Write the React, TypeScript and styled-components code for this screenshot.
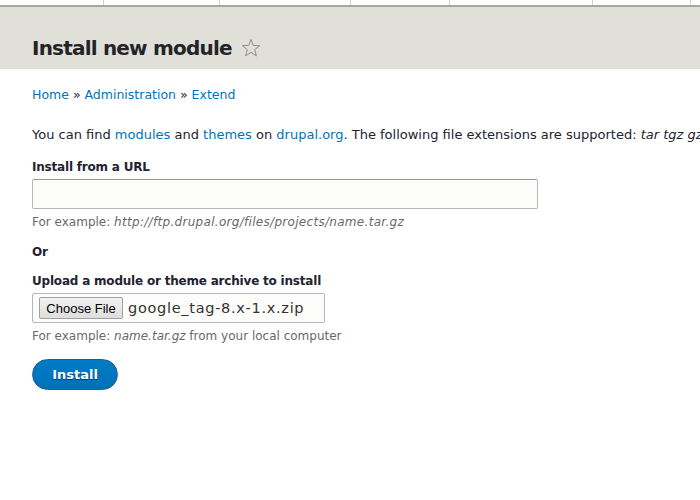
import React from "react";
import styled, { createGlobalStyle } from "styled-components";

const Global = createGlobalStyle`
  html, body { margin: 0; padding: 0; background: #ffffff; overflow: hidden; }
  body { font-family: "DejaVu Sans", "Liberation Sans", sans-serif; color: #222330; font-size: 13px; }
`;

const Toolbar = styled.div`
  display: flex;
  height: 5px;
  background: #ffffff;
  border-bottom: 2px solid #a7a79f;
`;

const ToolbarItem = styled.div<{ $w: number }>`
  width: ${(p) => p.$w}px;
  flex: none;
  box-sizing: border-box;
  border-right: 1px solid #d4d4d0;
`;

const Header = styled.header`
  background: #e0e0d8;
  height: 62px;
  box-sizing: border-box;
  padding: 0 32px 9px;
  display: flex;
  align-items: flex-end;
`;

const Title = styled.h1`
  margin: 0;
  font-size: 20px;
  letter-spacing: -0.8px;
  font-weight: bold;
  color: #232429;
  display: flex;
  align-items: center;
  gap: 9px;
`;

const Main = styled.main`
  padding: 0 32px;
`;

const Breadcrumb = styled.nav`
  margin-top: 17px;
  line-height: 18px;
  font-size: 12.5px;
  color: #222330;
`;

const Link = styled.a`
  color: #0074bd;
  text-decoration: none;
`;

const Intro = styled.p`
  margin: 22px -32px 0 0;
  line-height: 18px;
  white-space: nowrap;
  overflow: hidden;
`;

const Label = styled.label`
  display: block;
  font-weight: bold;
  font-size: 12px;
  letter-spacing: -0.2px;
  line-height: 18px;
`;

const Field = styled.div<{ $top: number }>`
  margin-top: ${(p) => p.$top}px;
`;

const TextInput = styled.input`
  display: block;
  margin-top: 3px;
  width: 506px;
  height: 30px;
  box-sizing: border-box;
  border: 1px solid #b8b8b8;
  border-top-color: #999;
  border-radius: 2px;
  background: #fcfcfa;
`;

const Description = styled.div`
  margin-top: 5px;
  font-size: 12px;
  line-height: 16px;
  color: #68696b;
`;

const Example = styled.em<{ $spacing?: number }>`
  font-style: italic;
  letter-spacing: ${(p) => p.$spacing ?? 0}px;
`;

const FileBox = styled.div`
  margin-top: 3px;
  width: 293px;
  height: 30px;
  box-sizing: border-box;
  border: 1px solid #b8b8b8;
  border-radius: 2px;
  background: #fcfcfa;
  display: flex;
  align-items: center;
  padding-left: 6px;
  gap: 5px;
`;

const ChooseButton = styled.span`
  font-family: "Liberation Sans", Arial, sans-serif;
  font-size: 13px;
  color: #000;
  width: 84px;
  height: 22px;
  box-sizing: border-box;
  display: flex;
  align-items: center;
  justify-content: center;
  border: 1px solid #a0a0a0;
  border-radius: 2px;
  background: linear-gradient(#f2f2f2, #dedede);
`;

const FileName = styled.span`
  font-size: 14.5px;
  letter-spacing: 0.7px;
  color: #333;
`;

const InstallButton = styled.button`
  display: block;
  margin-top: 15px;
  width: 86px;
  height: 31px;
  border-radius: 16px;
  border: 1px solid #1e5c90;
  background: linear-gradient(#007bc6, #0071b8);
  color: #fff;
  font-family: "DejaVu Sans", sans-serif;
  font-weight: bold;
  font-size: 13px;
  text-shadow: 0 1px 1px rgba(0,0,0,0.5);
  cursor: pointer;
`;

const Star = () => (
  <svg width="20" height="20" viewBox="0 0 20 20">
    <path
      d="M10 1.5 L12.3 7.4 L18.6 7.7 L13.7 11.7 L15.4 17.9 L10 14.4 L4.6 17.9 L6.3 11.7 L1.4 7.7 L7.7 7.4 Z"
      fill="none"
      stroke="#8e8e88"
      strokeWidth="1"
      strokeLinejoin="round"
    />
  </svg>
);

export default function App() {
  const widths = [104, 116, 131, 99, 143, 98];
  return (
    <>
      <Global />
      <Toolbar>
        {widths.map((w, i) => (
          <ToolbarItem key={i} $w={w} />
        ))}
      </Toolbar>
      <Header>
        <Title>
          Install new module <Star />
        </Title>
      </Header>
      <Main>
        <Breadcrumb>
          <Link href="#">Home</Link> » <Link href="#">Administration</Link> » <Link href="#">Extend</Link>
        </Breadcrumb>
        <Intro>
          You can find <Link href="#">modules</Link> and <Link href="#">themes</Link> on{" "}
          <Link href="#">drupal.org</Link>. The following file extensions are supported: <em>tar tgz gz bz2 zip</em>.
        </Intro>
        <Field $top={14}>
          <Label>Install from a URL</Label>
          <TextInput type="text" />
          <Description>
            For example: <Example $spacing={0.3}>http://ftp.drupal.org/files/projects/name.tar.gz</Example>
          </Description>
        </Field>
        <Field $top={13}>
          <Label>Or</Label>
        </Field>
        <Field $top={11}>
          <Label>Upload a module or theme archive to install</Label>
          <FileBox>
            <ChooseButton>Choose File</ChooseButton>
            <FileName>google_tag-8.x-1.x.zip</FileName>
          </FileBox>
          <Description>
            For example: <Example>name.tar.gz</Example> from your local computer
          </Description>
        </Field>
        <InstallButton>Install</InstallButton>
      </Main>
    </>
  );
}
